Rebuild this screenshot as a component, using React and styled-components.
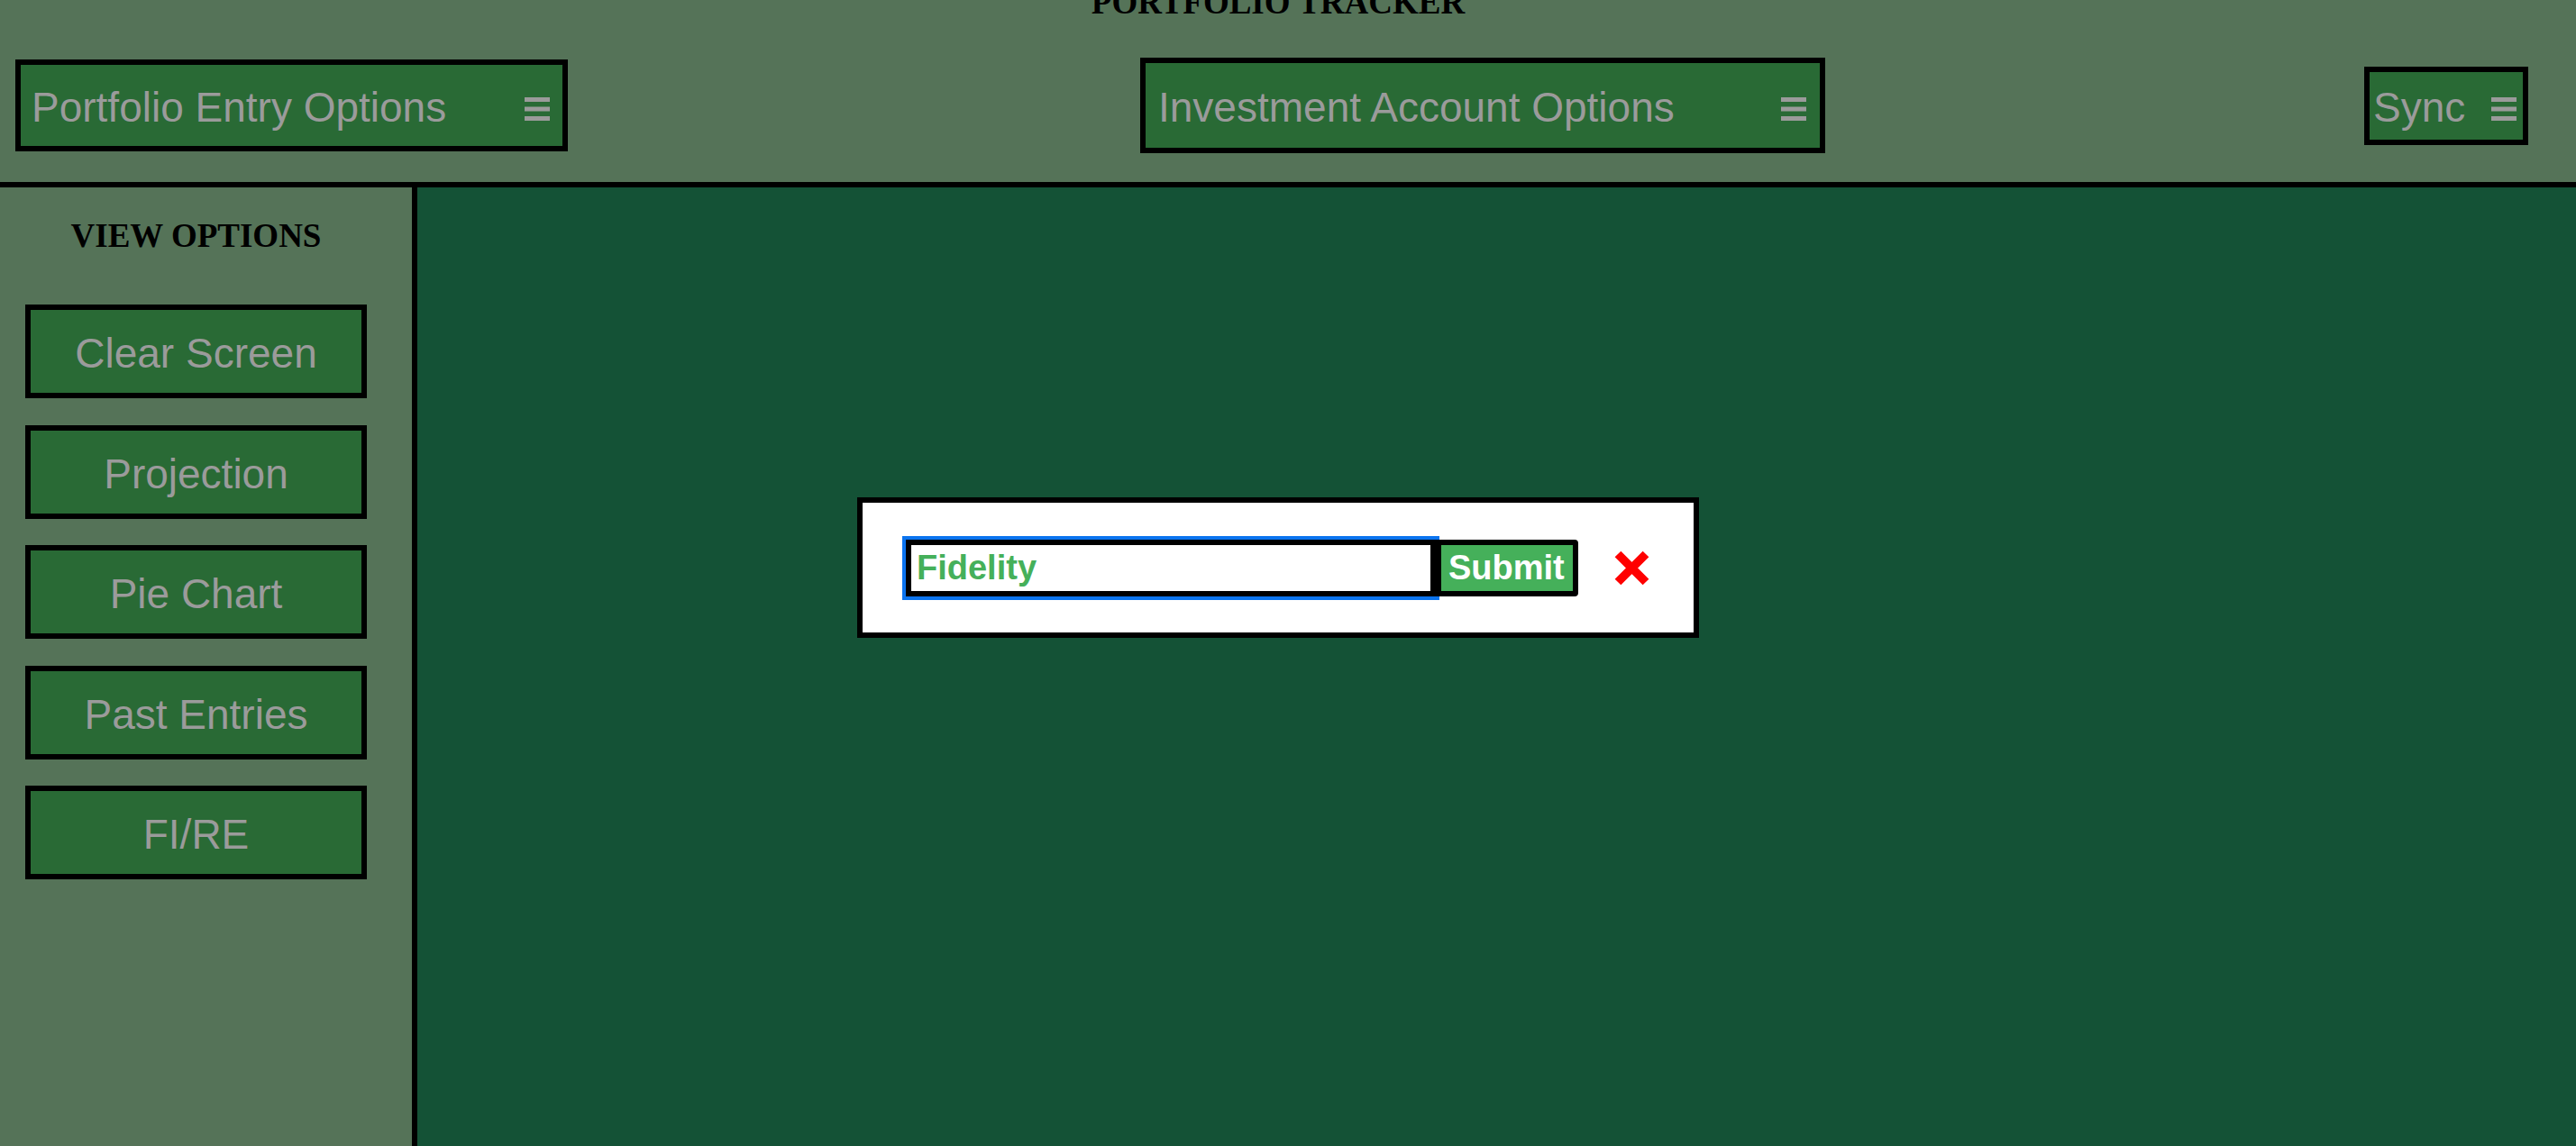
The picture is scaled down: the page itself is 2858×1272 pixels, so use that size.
import React from "react";
import styled, { createGlobalStyle } from "styled-components";

const GlobalStyle = createGlobalStyle`
  html, body {
    margin: 0;
    padding: 0;
    height: 100%;
    overflow: hidden;
  }
  #root {
    height: 100%;
  }
`;

const Page = styled.div`
  height: 100vh;
  display: flex;
  flex-direction: column;
  background: #557358;
  position: relative;
`;

const Header = styled.header`
  height: 202px;
  flex-shrink: 0;
  display: flex;
  flex-direction: column;
  border-bottom: 6px solid #000;
`;

const Title = styled.h1`
  margin: -16px 0 0;
  padding-right: 22px;
  font-family: "Liberation Serif", "Times New Roman", serif;
  font-weight: 700;
  font-size: 37px;
  line-height: 37px;
  text-align: center;
  color: #000;
`;

const HeaderRow = styled.div`
  flex: 1;
  display: flex;
  align-items: center;
  padding: 11px 0 0 17px;
`;

const MenuButton = styled.button`
  box-sizing: border-box;
  width: ${({ $w }) => $w}px;
  height: ${({ $h }) => $h}px;
  margin-left: ${({ $ml }) => $ml || 0}px;
  padding: 4px ${({ $pr }) => $pr}px 0 ${({ $pl }) => $pl}px;
  display: flex;
  align-items: center;
  justify-content: space-between;
  background: #296a35;
  border: 6px solid #000;
  border-radius: 0;
  color: #9b9b9b;
  font-family: "Liberation Sans", Arial, sans-serif;
  font-size: 46px;
  white-space: nowrap;
  cursor: pointer;
`;

const MenuIcon = styled.svg`
  width: 28px;
  height: 26px;
  margin-top: 4px;
  flex-shrink: 0;
`;

const Body = styled.div`
  flex: 1;
  display: flex;
  min-height: 0;
`;

const Sidebar = styled.aside`
  width: 463px;
  flex-shrink: 0;
  box-sizing: border-box;
  padding-left: 28px;
  border-right: 6px solid #000;
  display: flex;
  flex-direction: column;
`;

const SideHeading = styled.h3`
  width: 379px;
  margin: 32px 0 55px;
  font-family: "Liberation Serif", "Times New Roman", serif;
  font-weight: 700;
  font-size: 37px;
  text-align: center;
  color: #000;
`;

const SideList = styled.div`
  width: 379px;
  display: flex;
  flex-direction: column;
  gap: 29.5px;
`;

const SideButton = styled.button`
  box-sizing: border-box;
  width: 100%;
  height: 104px;
  padding: 4px 0 0;
  background: #296a35;
  border: 6px solid #000;
  border-radius: 0;
  color: #9b9b9b;
  font-family: "Liberation Sans", Arial, sans-serif;
  font-size: 46px;
  cursor: pointer;
`;

const Main = styled.main`
  flex: 1;
  background: #145236;
`;

const Modal = styled.form`
  position: absolute;
  left: 951px;
  top: 552px;
  box-sizing: border-box;
  width: 934px;
  height: 156px;
  padding-left: 48px;
  display: flex;
  align-items: center;
  background: #fff;
  border: 6px solid #000;
`;

const NameInput = styled.input`
  box-sizing: border-box;
  width: 588px;
  height: 63px;
  padding: 0 6px;
  border: 6px solid #000;
  outline: 4px solid #0b74ef;
  outline-offset: 0;
  background: #fff;
  color: #45b05a;
  font-family: "Liberation Sans", Arial, sans-serif;
  font-weight: 700;
  font-size: 38px;
`;

const SubmitButton = styled.button`
  position: relative;
  z-index: 1;
  box-sizing: border-box;
  width: 158px;
  height: 63px;
  padding: 0 8px;
  background: #45b05a;
  border: 6px solid #000;
  border-radius: 0 4px 4px 0;
  color: #fff;
  font-family: "Liberation Sans", Arial, sans-serif;
  font-weight: 700;
  font-size: 38px;
  text-align: left;
  cursor: pointer;
`;

const CloseButton = styled.button`
  margin-left: 40px;
  padding: 0;
  border: none;
  background: none;
  display: flex;
  cursor: pointer;
`;

const Hamburger = () => (
  <MenuIcon viewBox="0 0 28 26">
    <rect x="0" y="0" width="28" height="5" fill="#9b9b9b" />
    <rect x="0" y="10.5" width="28" height="5" fill="#9b9b9b" />
    <rect x="0" y="21" width="28" height="5" fill="#9b9b9b" />
  </MenuIcon>
);

const CloseIcon = () => (
  <svg width="39" height="39" viewBox="0 0 39 39">
    <path d="M4 4 L35 35 M35 4 L4 35" stroke="#ff0000" strokeWidth="9.5" />
  </svg>
);

const viewOptions = ["Clear Screen", "Projection", "Pie Chart", "Past Entries", "FI/RE"];

export default function App() {
  return (
    <>
      <GlobalStyle />
      <Page>
        <Header>
          <Title>PORTFOLIO TRACKER</Title>
          <HeaderRow>
            <MenuButton $w={613} $h={102} $pl={12} $pr={14}>
              Portfolio Entry Options
              <Hamburger />
            </MenuButton>
            <MenuButton $w={760} $h={106} $pl={14} $pr={15} $ml={635}>
              Investment Account Options
              <Hamburger />
            </MenuButton>
            <MenuButton $w={182} $h={87} $pl={4} $pr={7} $ml={598}>
              Sync
              <Hamburger />
            </MenuButton>
          </HeaderRow>
        </Header>
        <Body>
          <Sidebar>
            <SideHeading>VIEW OPTIONS</SideHeading>
            <SideList>
              {viewOptions.map((label) => (
                <SideButton key={label}>{label}</SideButton>
              ))}
            </SideList>
          </Sidebar>
          <Main />
        </Body>
        <Modal onSubmit={(e) => e.preventDefault()}>
          <NameInput type="text" defaultValue="Fidelity" />
          <SubmitButton type="submit">Submit</SubmitButton>
          <CloseButton type="button" aria-label="Close">
            <CloseIcon />
          </CloseButton>
        </Modal>
      </Page>
    </>
  );
}
